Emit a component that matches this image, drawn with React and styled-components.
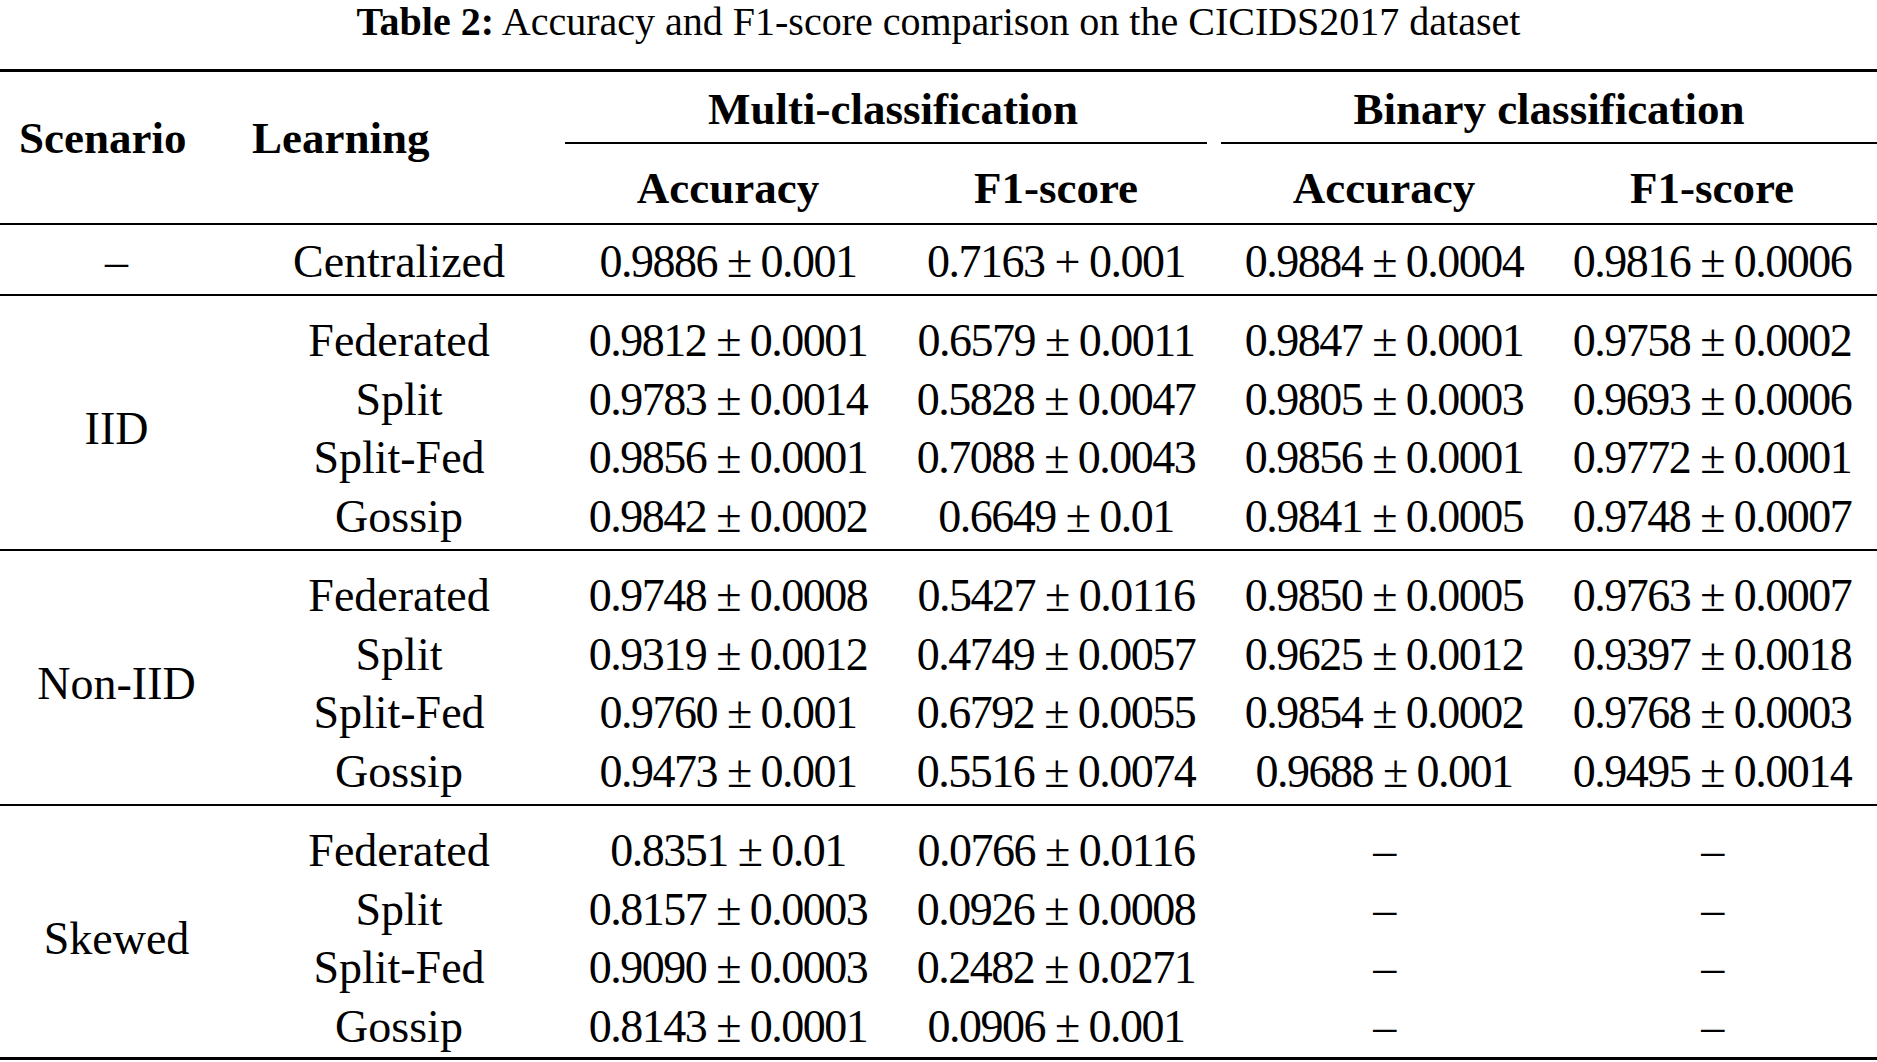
import React, { Component } from 'react';
import styled, { createGlobalStyle } from 'styled-components';

const GlobalStyle = createGlobalStyle`
    html, body {
        margin: 0;
        padding: 0;
        background: #fff;
    }

    body {
        font-family: "Liberation Serif", "Times New Roman", serif;
        color: #000;
    }
`;

const COLUMNS = '233px 332px 326px 330px 326px 330px';

const StyledWrapper = styled.div`
    width: 1877px;
    overflow: hidden;
`;

const Caption = styled.div`
    font-size: 40px;
    line-height: 44px;
    height: 44px;
    text-align: center;
    margin-bottom: 25px;

    b {
        font-weight: bold;
    }
`;

const Table = styled.div`
    border-top: 3px solid #000;
    border-bottom: 3px solid #000;
`;

const HeaderGrid = styled.div`
    display: grid;
    grid-template-columns: ${COLUMNS};
    grid-template-rows: 60px 79px;
    padding-top: 12px;
    border-bottom: 2px solid #000;
    font-weight: bold;
    font-size: 45px;
    line-height: 50px;
`;

const RowLabel = styled.div`
    grid-row: 1 / span 2;
    grid-column: ${({ col }) => col};
    padding-left: 19px;
    margin-top: 29px;
`;

const GroupHead = styled.div`
    grid-row: 1;
    grid-column: ${({ col }) => col};
    display: flex;
    flex-direction: column;
    text-align: center;

    span {
        display: block;
        height: 50px;
    }
`;

const CMidRule = styled.div`
    margin-top: 8px;
    margin-right: ${({ trim }) => (trim ? '14px' : '0')};
    border-top: 2px solid #000;
`;

const SubHead = styled.div`
    grid-row: 2;
    grid-column: ${({ col }) => col};
    text-align: center;
    padding-top: 19px;
`;

const Group = styled.div`
    display: grid;
    grid-template-columns: ${COLUMNS};
    grid-auto-rows: ${({ pitch }) => pitch}px;
    padding-top: ${({ top }) => top}px;
    padding-bottom: ${({ bottom }) => bottom}px;
    border-top: ${({ first }) => (first ? 'none' : '2px solid #000')};
    font-size: 46px;
    line-height: ${({ pitch }) => pitch}px;
`;

const Scenario = styled.div`
    grid-column: 1;
    grid-row: 1 / span ${({ span }) => span};
    align-self: center;
    text-align: center;
`;

const Cell = styled.div`
    text-align: center;
    white-space: nowrap;
    letter-spacing: ${({ num }) => (num ? '-1.5px' : '0')};
`;

const centralized = ['Centralized', '0.9886 ± 0.001', '0.7163 + 0.001', '0.9884 ± 0.0004', '0.9816 ± 0.0006'];

const groups = [
    {
        name: 'IID',
        rows: [
            ['Federated', '0.9812 ± 0.0001', '0.6579 ± 0.0011', '0.9847 ± 0.0001', '0.9758 ± 0.0002'],
            ['Split', '0.9783 ± 0.0014', '0.5828 ± 0.0047', '0.9805 ± 0.0003', '0.9693 ± 0.0006'],
            ['Split-Fed', '0.9856 ± 0.0001', '0.7088 ± 0.0043', '0.9856 ± 0.0001', '0.9772 ± 0.0001'],
            ['Gossip', '0.9842 ± 0.0002', '0.6649 ± 0.01', '0.9841 ± 0.0005', '0.9748 ± 0.0007'],
        ],
    },
    {
        name: 'Non-IID',
        rows: [
            ['Federated', '0.9748 ± 0.0008', '0.5427 ± 0.0116', '0.9850 ± 0.0005', '0.9763 ± 0.0007'],
            ['Split', '0.9319 ± 0.0012', '0.4749 ± 0.0057', '0.9625 ± 0.0012', '0.9397 ± 0.0018'],
            ['Split-Fed', '0.9760 ± 0.001', '0.6792 ± 0.0055', '0.9854 ± 0.0002', '0.9768 ± 0.0003'],
            ['Gossip', '0.9473 ± 0.001', '0.5516 ± 0.0074', '0.9688 ± 0.001', '0.9495 ± 0.0014'],
        ],
    },
    {
        name: 'Skewed',
        rows: [
            ['Federated', '0.8351 ± 0.01', '0.0766 ± 0.0116', '–', '–'],
            ['Split', '0.8157 ± 0.0003', '0.0926 ± 0.0008', '–', '–'],
            ['Split-Fed', '0.9090 ± 0.0003', '0.2482 ± 0.0271', '–', '–'],
            ['Gossip', '0.8143 ± 0.0001', '0.0906 ± 0.001', '–', '–'],
        ],
    },
];

class App extends Component {

    render() {
        return (
            <StyledWrapper>
                <GlobalStyle />
                <Caption>
                    <b>Table 2:</b> Accuracy and F1-score comparison on the CICIDS2017 dataset
                </Caption>
                <Table>
                    <HeaderGrid>
                        <RowLabel col={1}>Scenario</RowLabel>
                        <RowLabel col={2}>Learning</RowLabel>
                        <GroupHead col="3 / span 2">
                            <span>Multi-classification</span>
                            <CMidRule trim />
                        </GroupHead>
                        <GroupHead col="5 / span 2">
                            <span>Binary classification</span>
                            <CMidRule />
                        </GroupHead>
                        <SubHead col={3}>Accuracy</SubHead>
                        <SubHead col={4}>F1-score</SubHead>
                        <SubHead col={5}>Accuracy</SubHead>
                        <SubHead col={6}>F1-score</SubHead>
                    </HeaderGrid>

                    <Group first pitch={58} top={8} bottom={3}>
                        <Scenario span={1}>–</Scenario>
                        {centralized.map((value, i) => (
                            <Cell key={i} num={i > 0}>{value}</Cell>
                        ))}
                    </Group>

                    {groups.map((group, g) => (
                        <Group key={group.name} pitch={58.5} top={16} bottom={g === groups.length - 1 ? 1 : 3}>
                            <Scenario span={group.rows.length}>{group.name}</Scenario>
                            {group.rows.map(row => (
                                row.map((value, i) => (
                                    <Cell key={row[0] + i} num={i > 0}>{value}</Cell>
                                ))
                            ))}
                        </Group>
                    ))}
                </Table>
            </StyledWrapper>
        );
    }
}

export default App;
